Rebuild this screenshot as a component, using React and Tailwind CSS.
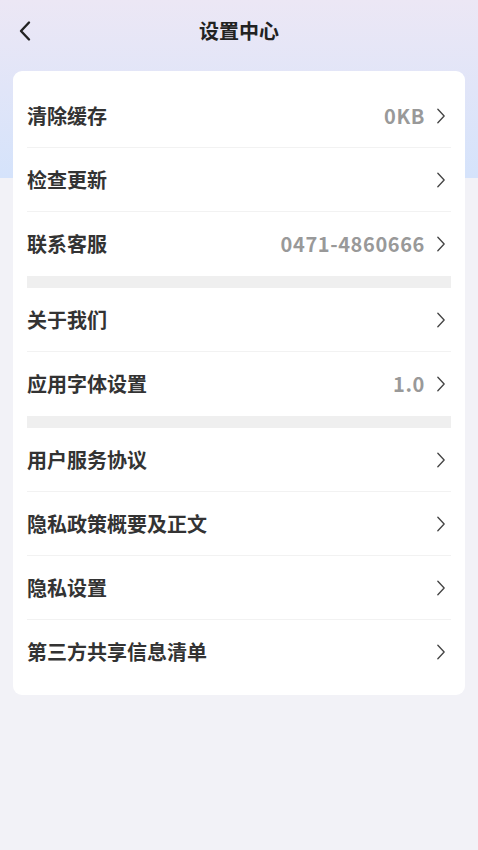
import React from "react";

const groups = [
  [
    { label: "清除缓存", value: "0KB" },
    { label: "检查更新" },
    { label: "联系客服", value: "0471-4860666" },
  ],
  [
    { label: "关于我们" },
    { label: "应用字体设置", value: "1.0" },
  ],
  [
    { label: "用户服务协议" },
    { label: "隐私政策概要及正文" },
    { label: "隐私设置" },
    { label: "第三方共享信息清单" },
  ],
];

const Chevron = ({ className }) => (
  <svg viewBox="0 0 12 20" className={className} fill="none" stroke="currentColor" strokeWidth="1.5" strokeLinecap="round" strokeLinejoin="round">
    <path d="M2.5 2.5 L9.5 10 L2.5 17.5" />
  </svg>
);

function Row({ label, value, last }) {
  return (
    <div className={`flex h-16 items-center pr-[4px] ${last ? "" : "border-b border-[#f2f2f2]"}`}>
      <span className="flex-1 text-[20px] font-bold text-[#333]">{label}</span>
      {value && <span className="mr-[10px] text-[20px] font-bold tracking-[0.6px] text-[#999]">{value}</span>}
      <Chevron className="h-[18px] w-[12px] text-[#444]" />
    </div>
  );
}

export default function App() {
  return (
    <div
      className="relative min-h-[850px] w-full bg-[#f2f2f7]"
      style={{ fontFamily: '"Noto Sans CJK SC", "Noto Sans", sans-serif' }}
    >
      <div className="absolute inset-x-0 top-0 h-[178px] bg-gradient-to-b from-[#ece7f5] to-[#d5e3fb]" />
      <div className="relative">
        <div className="relative flex h-[62px] items-center justify-center">
          <button className="absolute left-[18px] top-[20px] text-[#222]">
            <svg viewBox="0 0 14 22" className="h-[22px] w-[14px]" fill="none" stroke="currentColor" strokeWidth="2.4" strokeLinecap="round" strokeLinejoin="round">
              <path d="M11 2.5 L3 11 L11 19.5" />
            </svg>
          </button>
          <h1 className="-mt-[1px] text-[20px] font-bold text-[#222]">设置中心</h1>
        </div>
        <div className="mx-[13px] mt-[9px] rounded-[9px] bg-white px-[14px] pb-[11px] pt-[13px]">
          {groups.map((g, gi) => (
            <div key={gi}>
              {gi > 0 && <div className="h-[12px] bg-[#efefef]" />}
              {g.map((r, ri) => (
                <Row key={r.label} {...r} last={ri === g.length - 1} />
              ))}
            </div>
          ))}
        </div>
      </div>
    </div>
  );
}
